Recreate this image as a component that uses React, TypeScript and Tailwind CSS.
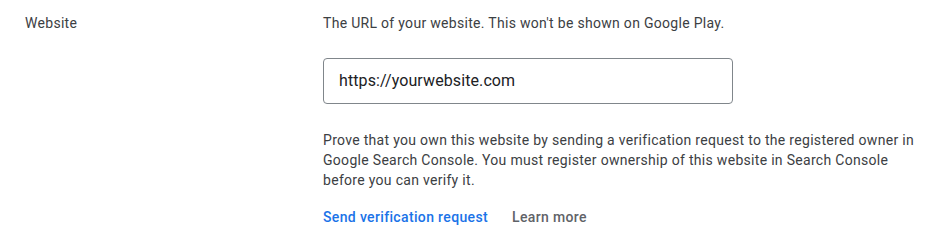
export default function App() {
    return (
        <div className="w-[930px] h-[236px] bg-white font-['Roboto',sans-serif] text-sm tracking-[0.3px] text-[#3c4043]">
            <div className="flex pl-[25px] pt-[13px]">
                <div className="w-[298px] leading-5 text-[#3c4043]">Website</div>
                <div className="flex flex-col">
                    <p className="leading-5">The URL of your website. This won't be shown on Google Play.</p>
                    <div className="mt-[25px] w-[410px] h-[46px] rounded border border-[#80868b] flex items-center px-[15px] text-base tracking-[0.1px] text-[#202124]">
                        https://yourwebsite.com
                    </div>
                    <p className="mt-[26px] w-[600px] leading-5">
                        Prove that you own this website by sending a verification request to the registered owner in Google Search Console. You must register ownership of this website in Search Console before you can verify it.
                    </p>
                    <div className="mt-[17px] flex items-center gap-6 leading-5 font-medium">
                        <button className="text-[#1a73e8] tracking-[0.35px]">Send verification request</button>
                        <button className="text-[#5f6368] tracking-[0.35px]">Learn more</button>
                    </div>
                </div>
            </div>
        </div>
    );
}
